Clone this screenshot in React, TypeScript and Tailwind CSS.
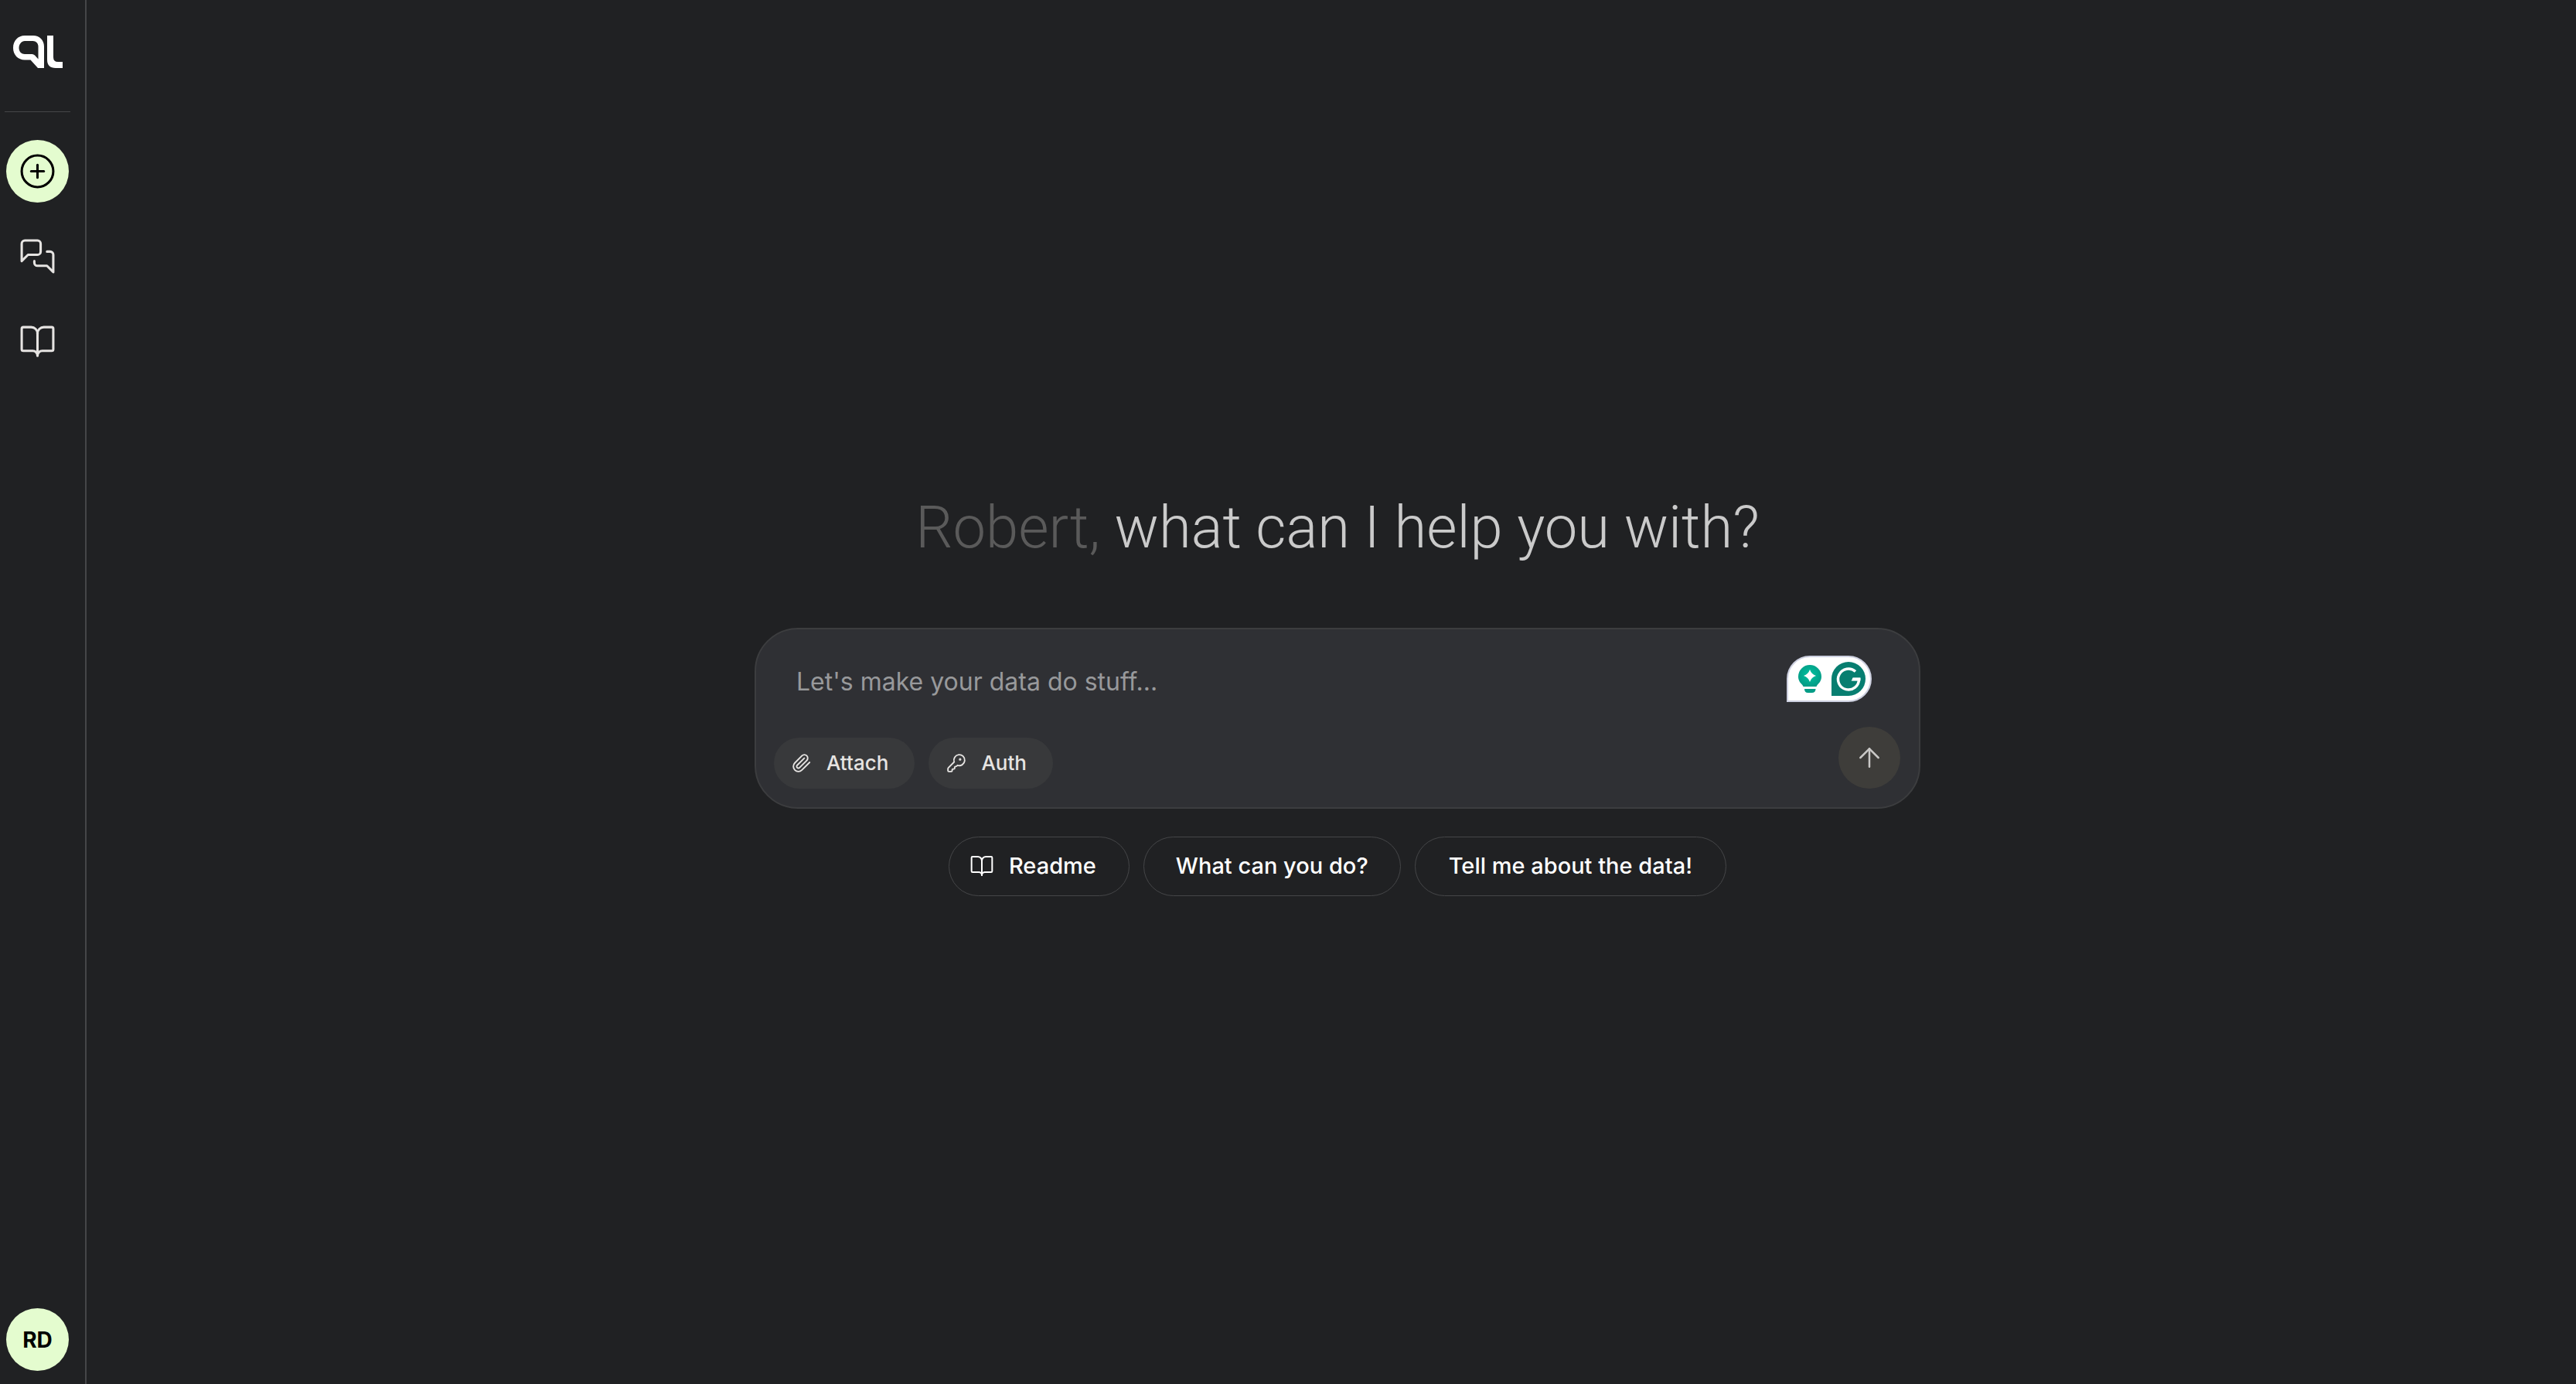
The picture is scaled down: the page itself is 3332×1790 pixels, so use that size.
import React, { useState } from "react";
import { ArrowUp, BookOpen, CirclePlus } from "lucide-react";

function Logo() {
  return (
    <svg viewBox="16 46 64 42" className="h-[42px] w-16" fill="#ffffff" aria-hidden="true">
      <path
        fillRule="evenodd"
        d="M31 46H42C50 46 56 52 56 60V88H48L38.500 77.500H31C22.500 77.500 16 71 16 62C16 52.500 22.500 46 31 46ZM31 53C27 53 23.500 57 23.500 62C23.500 67 27 70 31 70H40.500Q42.500 70 44 71.500L48.500 76.500V60C48.500 56 45.500 53 41.500 53Z"
      />
      <path d="M60 46H68V74Q68 80 74 80H80V88H71Q60 88 60 77Z" />
    </svg>
  );
}

function ChatsIcon() {
  return (
    <svg
      viewBox="0 0 24 24"
      className="size-[49px]"
      fill="none"
      stroke="currentColor"
      strokeWidth="1.5"
      strokeLinecap="round"
      strokeLinejoin="round"
      aria-hidden="true"
    >
      <path d="M14 9a2 2 0 0 1-2 2H6l-4 4V4a2 2 0 0 1 2-2h8a2 2 0 0 1 2 2v5Z" />
      <path d="M18 9h2a2 2 0 0 1 2 2v11l-4-4h-6a2 2 0 0 1-2-2v-1" />
    </svg>
  );
}

function ClipIcon() {
  return (
    <svg
      viewBox="0 0 24 24"
      className="size-[26px]"
      fill="none"
      stroke="currentColor"
      strokeWidth="1.75"
      strokeLinecap="round"
      strokeLinejoin="round"
      aria-hidden="true"
    >
      <path d="m21.440 11.050-9.190 9.190a6 6 0 0 1-8.490-8.490l8.570-8.570A4 4 0 1 1 18 8.840l-8.590 8.570a2 2 0 0 1-2.830-2.830l8.490-8.480" />
    </svg>
  );
}

function KeyIcon() {
  return (
    <svg
      viewBox="0 0 24 24"
      className="size-[26px]"
      fill="none"
      stroke="currentColor"
      strokeWidth="1.75"
      strokeLinecap="round"
      strokeLinejoin="round"
      aria-hidden="true"
    >
      <path d="M2.600 17.400A2 2 0 0 0 2 18.800V21a1 1 0 0 0 1 1h3a1 1 0 0 0 1-1v-1a1 1 0 0 1 1-1h1a1 1 0 0 0 1-1v-1a1 1 0 0 1 1-1h.200a2 2 0 0 0 1.400-.600l.800-.800a6.500 6.500 0 1 0-4-4z" />
      <circle cx="16.500" cy="7.500" r=".6" fill="currentColor" />
    </svg>
  );
}

function WritingBadge() {
  return (
    <div className="absolute top-[34px] right-[61px] flex h-[60px] w-[110px] items-center justify-between rounded-[30px] rounded-bl-none border-2 border-[#cdd0e0] bg-white pr-1.5 pl-3">
      <svg viewBox="0 0 32 38" className="h-[38px] w-8" aria-hidden="true">
        <defs>
          <radialGradient id="bulb" cx="50%" cy="45%" r="55%">
            <stop offset="0" stopColor="#00c29f" />
            <stop offset="1" stopColor="#039c86" />
          </radialGradient>
        </defs>
        <path
          d="M16 1a15 15 0 0 1 15 15c0 5-2.500 8-5 10.500-.7.800-1.200 1.700-1.500 2.500h-17c-.3-.8-.8-1.700-1.500-2.500C3.500 24 1 21 1 16A15 15 0 0 1 16 1Z"
          fill="url(#bulb)"
        />
        <path d="M16 7Q18 13 24 15Q18 17 16 23Q14 17 8 15Q14 13 16 7Z" fill="#ffffff" />
        <path d="M9 32h14.500q0 5-5 5h-5Q9 37 9 32Z" fill="#039c86" />
      </svg>
      <svg viewBox="0 0 44 44" className="size-11" aria-hidden="true">
        <path d="M0 22A22 22 0 1 1 22 44H0Z" fill="#077e70" />
        <path
          d="M31 12.500A13.500 13.500 0 1 0 35.500 22.500H27"
          fill="none"
          stroke="#ffffff"
          strokeWidth="3.500"
        />
        <path d="M25.500 24.500L28 20.500H37.500V24.500Z" fill="#ffffff" />
      </svg>
    </div>
  );
}

function Sidebar() {
  return (
    <aside className="flex min-h-screen w-28 shrink-0 flex-col items-center border-r-2 border-[#454648] pr-[19px] pb-[17px] pl-1.5">
      <a href="#" aria-label="Home" className="mt-[46px]">
        <Logo />
      </a>
      <hr className="mt-14 w-full border-t border-[#454648]" />
      <nav className="mt-9 flex flex-col items-center gap-[29px] text-[#e6e4e2]">
        <button
          type="button"
          aria-label="New chat"
          className="flex size-[81px] items-center justify-center rounded-full bg-[#e4fccf] text-black"
        >
          <CirclePlus className="size-[49px]" strokeWidth={1.500} />
        </button>
        <button type="button" aria-label="Chats" className="flex size-[81px] items-center justify-center">
          <ChatsIcon />
        </button>
        <button type="button" aria-label="Library" className="flex size-[81px] items-center justify-center">
          <BookOpen className="size-[49px]" strokeWidth={1.500} />
        </button>
      </nav>
      <button
        type="button"
        aria-label="Account"
        className="mt-auto size-[81px] rounded-full bg-[#e4fccf] text-[28px] font-bold text-black"
      >
        RD
      </button>
    </aside>
  );
}

const pill =
  "flex h-[77px] items-center rounded-full border border-[#454648] text-[29px] font-medium text-white";
const tool =
  "flex h-[66px] items-center rounded-full bg-[#38393b] text-[26px] font-medium text-[#e6e4e2] gap-[19px] pl-[23px] pr-[34px]";

export default function App() {
  const [prompt, setPrompt] = useState("");

  return (
    <div className="flex min-h-screen bg-[#202123] font-['Inter',sans-serif]">
      <Sidebar />
      <main className="flex min-w-0 flex-1 flex-col items-center justify-center pt-1 pl-4">
        <h1 className="text-center text-[76px] leading-[92px] font-light text-[#cacaca] font-['Roboto',sans-serif]">
          <span className="text-[#5a5a5a]">Robert,</span> what can I help you with?
        </h1>

        <form
          onSubmit={(e) => e.preventDefault()}
          className="relative mt-[84px] w-full max-w-[1508px] rounded-[56px] border-2 border-[#3c3d3f] bg-[#2f3034] py-6 pr-6 pl-[23px]"
        >
          <textarea
            aria-label="Message"
            rows={1}
            value={prompt}
            onChange={(e) => setPrompt(e.target.value)}
            placeholder="Let's make your data do stuff..."
            className="mt-5 block h-12 w-full resize-none bg-transparent pr-40 pl-[29px] text-[32px] leading-[48px] text-[#e6e4e2] outline-none placeholder:text-[#98999b]"
          />
          <WritingBadge />
          <div className="mt-[34px] flex items-end gap-[18px]">
            <button type="button" className={tool}>
              <ClipIcon />
              Attach
            </button>
            <button type="button" className={tool}>
              <KeyIcon />
              Auth
            </button>
            <button
              type="submit"
              aria-label="Send"
              className="ml-auto flex size-20 items-center justify-center rounded-full bg-[#3e3d3a] text-[#c9c8c6]"
            >
              <ArrowUp className="size-10" strokeWidth={1.500} />
            </button>
          </div>
        </form>

        <div className="mt-9 flex flex-wrap justify-center gap-[18px]">
          <button type="button" className={`${pill} gap-[19px] pr-[42px] pl-[26px]`}>
            <BookOpen className="size-8" strokeWidth={1.500} />
            Readme
          </button>
          <button type="button" className={`${pill} px-[41px]`}>
            What can you do?
          </button>
          <button type="button" className={`${pill} px-[43px]`}>
            Tell me about the data!
          </button>
        </div>
      </main>
    </div>
  );
}
